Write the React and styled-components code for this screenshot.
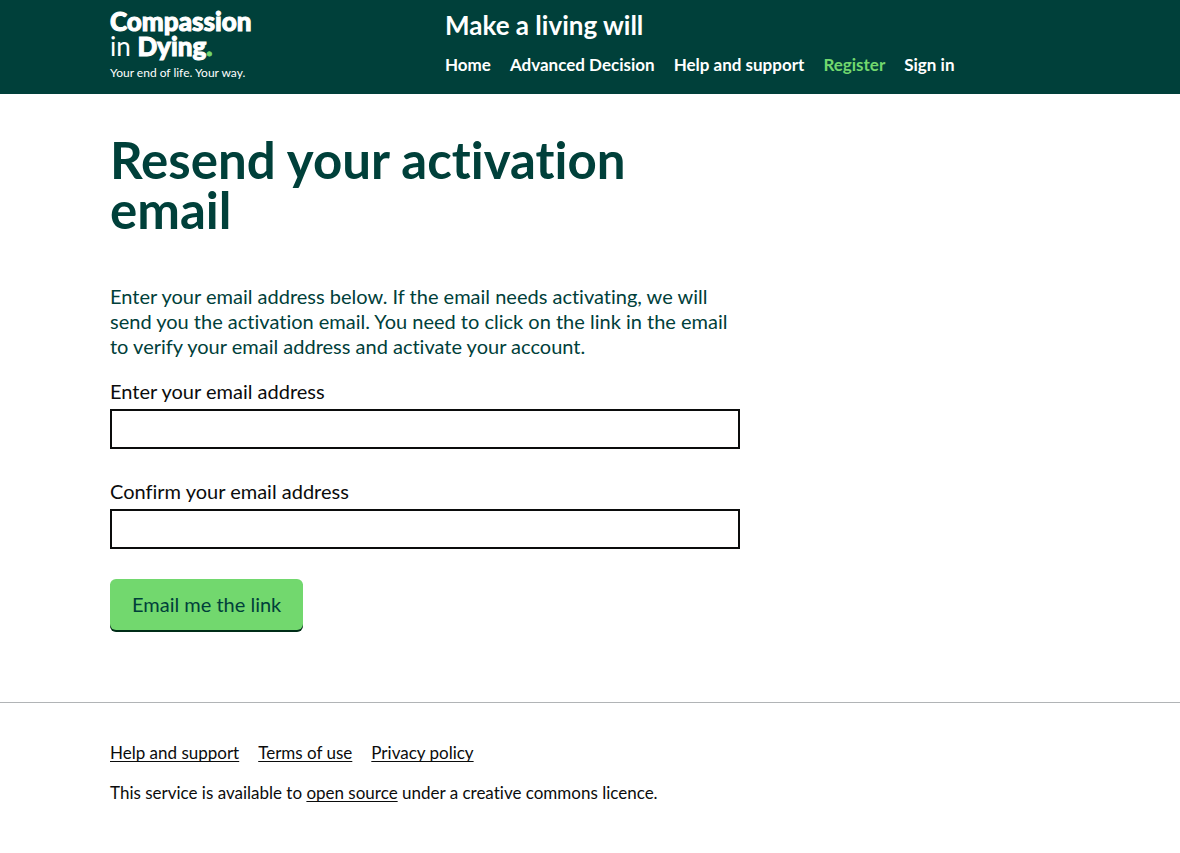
import React from "react";
import styled, { createGlobalStyle } from "styled-components";

const GlobalStyle = createGlobalStyle`
  *, *::before, *::after { box-sizing: border-box; }
  body {
    margin: 0;
    background: #fff;
    color: #0b0c0c;
    font-family: Lato, "Open Sans", sans-serif;
    font-size: 20px;
    font-variant-ligatures: none;
    line-height: 25px;
  }
`;

const Container = styled.div`
  max-width: 960px;
  margin: 0 auto;

  @media (max-width: 1020px) {
    margin: 0 30px;
  }
`;

const Header = styled.header`
  background: #00403a;
  color: #fff;
`;

const HeaderRow = styled(Container)`
  display: grid;
  grid-template-columns: 1fr 2fr;
  min-height: 94px;
`;

const LogoLink = styled.a`
  display: inline-block;
  padding-top: 9px;
  color: #fff;
  text-decoration: none;
  white-space: nowrap;
`;

const LogoLine = styled.span`
  display: block;
  font-size: 26px;
  line-height: 25px;
`;

const LogoBold = styled.span`
  color: ${({ $accent }) => ($accent ? "#72d86e" : "inherit")};
  font-weight: 900;
  -webkit-text-stroke: 1px currentColor;
`;

const Tagline = styled.span`
  display: block;
  margin-top: 4px;
  font-size: 12px;
  line-height: 20px;
`;

const HeaderContent = styled.div`
  padding: 8px 0 0 15px;
`;

const ServiceName = styled.a`
  display: block;
  color: #fff;
  font-size: 26px;
  font-weight: 700;
  line-height: 35px;
  text-decoration: none;
`;

const Nav = styled.nav`
  display: flex;
  flex-wrap: wrap;
  gap: 0 19px;
  margin-top: 9px;
`;

const NavLink = styled.a`
  color: ${({ $active }) => ($active ? "#72d86e" : "#fff")};
  font-size: 17px;
  font-weight: 700;
  line-height: 25px;
  text-decoration: none;
`;

const Main = styled(Container).attrs({ as: "main" })`
  display: grid;
  grid-template-columns: 2fr 1fr;
  column-gap: 15px;
  padding: 41px 0 72px;
`;

const Title = styled.h1`
  margin: 0 0 49px;
  color: #00403a;
  font-size: 51px;
  font-weight: 700;
  line-height: 50px;
`;

const Intro = styled.p`
  margin: 0 0 20px;
  color: #00403a;
`;

const Field = styled.div`
  margin-bottom: 30px;
`;

const Label = styled.label`
  display: block;
  margin-bottom: 5px;
`;

const Input = styled.input`
  display: block;
  width: 100%;
  height: 40px;
  padding: 5px;
  border: 2px solid #0b0c0c;
  border-radius: 0;
  font: inherit;
`;

const Button = styled.button`
  display: block;
  padding: 13px 22px;
  border: 0;
  border-radius: 6px;
  background: #72d86e;
  box-shadow: 0 2px 0 #002d18;
  color: #00403a;
  font: inherit;
`;

const Footer = styled.footer`
  border-top: 1px solid #b1b4b6;
  padding: 37px 0 40px;
  font-size: 17px;
`;

const FooterLinks = styled.ul`
  display: flex;
  flex-wrap: wrap;
  gap: 0 19px;
  margin: 0 0 15px;
  padding: 0;
  list-style: none;
`;

const FooterLink = styled.a`
  color: inherit;
  text-decoration: underline;
  text-decoration-thickness: 1px;
  text-underline-offset: 2px;
  text-decoration-skip-ink: none;
`;

const FooterText = styled.p`
  margin: 0;
`;

const navItems = ["Home", "Advanced Decision", "Help and support", "Register", "Sign in"];
const footerItems = ["Help and support", "Terms of use", "Privacy policy"];

function Logo() {
  return (
    <LogoLink href="#">
      <LogoLine><LogoBold>Compassion</LogoBold></LogoLine>
      <LogoLine>
        in <LogoBold>Dying</LogoBold><LogoBold $accent>.</LogoBold>
      </LogoLine>
      <Tagline>Your end of life. Your way.</Tagline>
    </LogoLink>
  );
}

function EmailField({ id, label }) {
  return (
    <Field>
      <Label htmlFor={id}>{label}</Label>
      <Input id={id} name={id} type="email" />
    </Field>
  );
}

export default function App() {
  return (
    <>
      <GlobalStyle />
      <Header>
        <HeaderRow>
          <div>
            <Logo />
          </div>
          <HeaderContent>
            <ServiceName href="#">Make a living will</ServiceName>
            <Nav>
              {navItems.map((item) => (
                <NavLink key={item} href="#" $active={item === "Register"}>{item}</NavLink>
              ))}
            </Nav>
          </HeaderContent>
        </HeaderRow>
      </Header>
      <Main>
        <div>
          <Title>Resend your activation email</Title>
          <Intro>
            Enter your email address below. If the email needs activating, we will send you the
            activation email. You need to click on the link in the email to verify your email
            address and activate your account.
          </Intro>
          <form>
            <EmailField id="email" label="Enter your email address" />
            <EmailField id="confirm-email" label="Confirm your email address" />
            <Button type="submit">Email me the link</Button>
          </form>
        </div>
      </Main>
      <Footer>
        <Container>
          <FooterLinks>
            {footerItems.map((item) => (
              <li key={item}><FooterLink href="#">{item}</FooterLink></li>
            ))}
          </FooterLinks>
          <FooterText>
            This service is available to <FooterLink href="#">open source</FooterLink> under a
            creative commons licence.
          </FooterText>
        </Container>
      </Footer>
    </>
  );
}
